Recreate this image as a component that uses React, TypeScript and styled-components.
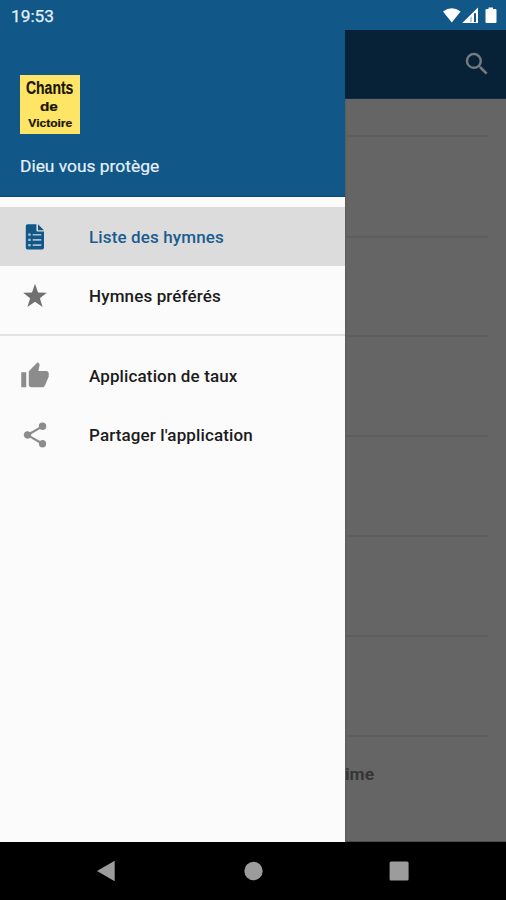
import React from "react";
import styled, { createGlobalStyle } from "styled-components";

const GlobalStyle = createGlobalStyle`
  *, *::before, *::after { box-sizing: border-box; }
  body { margin: 0; background: #000; font-family: Roboto, "Noto Sans", sans-serif; }
  svg { display: block; flex: none; }
`;

const Screen = styled.div`
  width: 506px;
  height: 900px;
  display: grid;
  grid-template-rows: 30px minmax(0, 1fr) 58px;
  overflow: hidden;
`;

const StatusBar = styled.header`
  display: flex;
  align-items: center;
  justify-content: space-between;
  padding: 2px 8px 0 11px;
  background: #115788;
  color: #e3eff9;
  font-size: 17.3px;
  line-height: 28px;
  -webkit-text-stroke: 0.25px currentColor;
`;

const Body = styled.div`
  display: grid;
  grid-template-columns: 345px 1fr;
  min-height: 0;
`;

const Drawer = styled.aside`
  background: #fbfbfb;
`;

const DrawerHeader = styled.div`
  height: 167px;
  padding: 45px 20px 0;
  background: #115788;
  border-bottom: 1px solid #0a4a7c;
`;

const Logo = styled.div`
  width: 60px;
  height: 59px;
  display: flex;
  flex-direction: column;
  align-items: center;
  padding-top: 3px;
  background: #fee566;
  color: #191505;
  font-family: "Liberation Sans", Arial, sans-serif;
  font-weight: 700;
`;

const LogoLine = styled.span<{ $size: number; $stretch: number; $height: number; $shift?: number }>`
  font-size: ${(p) => p.$size}px;
  line-height: ${(p) => p.$height}px;
  height: ${(p) => p.$height}px;
  margin-left: ${(p) => p.$shift ?? 0}px;
  transform: scaleX(${(p) => p.$stretch});
  -webkit-text-stroke: 0.2px #191505;
`;

const Greeting = styled.p`
  margin: 21px 0 0;
  color: #e6f1fa;
  font-size: 17.4px;
  line-height: 22px;
  -webkit-text-stroke: 0.2px currentColor;
`;

const Menu = styled.nav`
  padding-top: 10px;
`;

const MenuItem = styled.div<{ $active?: boolean }>`
  height: 59px;
  display: grid;
  grid-template-columns: 30px 1fr;
  column-gap: 39px;
  align-items: center;
  padding: 0 20px;
  background: ${(p) => (p.$active ? "#dcdcdc" : "transparent")};
  color: ${(p) => (p.$active ? "#1b5c90" : "#1c1c1c")};
  font-size: 17px;
  font-weight: 500;
  letter-spacing: 0.13px;
  white-space: nowrap;
`;

const IconSlot = styled.span<{ $color: string }>`
  display: flex;
  justify-content: center;
  color: ${(p) => p.$color};
`;

const Divider = styled.hr`
  height: 2px;
  margin: 9px 0 10px;
  border: 0;
  background: #e2e2e2;
`;

const Page = styled.main`
  display: flex;
  flex-direction: column;
  background: #656565;
  border-bottom: 1px solid #4c4c4c;
  border-left: 1px solid #5c5c5c;
  min-width: 0;
`;

const AppBar = styled.div`
  height: 69px;
  margin-left: -1px;
  display: flex;
  align-items: center;
  justify-content: flex-end;
  padding-right: 14px;
  background: #072237;
  border-bottom: 1px solid #152b3c;
  color: #747a7f;
`;

const HymnRow = styled.div<{ $height: number; $last?: boolean }>`
  height: ${(p) => p.$height}px;
  margin-left: -1px;
  margin-right: 18px;
  padding-top: 26px;
  border-bottom: ${(p) => (p.$last ? "0" : "2px solid #5e5e5e")};
  color: #363636;
  font-size: 17.4px;
  font-weight: 700;
  line-height: 22px;
`;

const NavBar = styled.footer`
  display: flex;
  align-items: center;
  justify-content: space-between;
  padding: 0 97px;
  background: #000;
  color: #9c9c9c;
`;

const StatusIcons = () => (
  <svg width="56" height="22" viewBox="0 0 56 22" fill="#fff">
    <path d="M1 6.4Q9.8.3 18.6 6.4L9.8 17.6Z" />
    <path d="M36 2.6V18H20.2Z" />
    <path d="M32 8.3h2V17h-2z" fill="#115788" />
    <path d="M30 11V17h-2v-4z" fill="#b5cbdc" />
    <path d="M46.500 2.500h4.500v1.600h2.500q1 0 1 1V17q0 1-1 1h-9q-1 0-1-1V5.100q0-1 1-1h2z" />
  </svg>
);

const SearchIcon = () => (
  <svg width="30" height="30" viewBox="0 0 24 24" fill="currentColor">
    <path d="M15.500 14h-.79l-.28-.27A6.471 6.471 0 0 0 16 9.500 6.500 6.500 0 1 0 9.500 16c1.610 0 3.090-.59 4.230-1.570l.27.28v.79l5 4.990L20.490 19l-4.990-5zm-6 0C7.010 14 5 11.990 5 9.500S7.010 5 9.500 5 14 7.010 14 9.500 11.990 14 9.500 14z" />
  </svg>
);

const ListIcon = () => (
  <svg width="20" height="26" viewBox="0 0 20 26">
    <path d="M2.500.3H11.400v6q0 1.300 1.300 1.300H19v16.200q0 1.700-1.700 1.700H2.500Q.8 25.500.8 23.800V2Q.8.3 2.500.3ZM13 .3 19 6.200H13Z" fill="currentColor" />
    <path d="M3.200 9.500h2.500v2.300H3.200zM3.200 14.800h2.500v2.300H3.200zM3.200 20h2.500v2.300H3.200zM7.700 9.900h8.600v1.600H7.700zM7.700 15.100h8.600v1.600H7.700zM7.700 20.300h8.600v1.600H7.700z" fill="#a9bfd0" />
  </svg>
);

const StarIcon = () => (
  <svg width="26" height="26" viewBox="0 0 26 26" fill="currentColor">
    <path d="M13 .8 16 9.600 24.800 9.700 17.900 15.200 20.600 24 13 18.800 5.400 24 8.100 15.200 1.200 9.700 10 9.600Z" />
  </svg>
);

const ThumbIcon = () => (
  <svg width="30" height="30" viewBox="0 0 24 24" fill="currentColor">
    <path d="M1 21h4V9H1v12zm22-11c0-1.100-.9-2-2-2h-6.310l.95-4.570.03-.32c0-.41-.17-.79-.44-1.060L14.170 1 7.590 7.590C7.220 7.950 7 8.450 7 9v10c0 1.100.9 2 2 2h9c.83 0 1.540-.5 1.840-1.220l3.020-7.050c.09-.23.14-.47.14-.73v-2z" />
  </svg>
);

const ShareIcon = () => (
  <svg width="30" height="30" viewBox="0 0 24 24" fill="currentColor">
    <path d="M18 16.080c-.76 0-1.440.3-1.960.77L8.910 12.700c.05-.23.09-.46.09-.7s-.04-.47-.09-.7l7.050-4.110c.54.5 1.250.81 2.040.81a3 3 0 1 0-3-3c0 .24.040.47.090.7L8.040 9.810A3 3 0 1 0 6 15c.79 0 1.500-.31 2.040-.81l7.120 4.160c-.05.21-.08.43-.08.65A2.920 2.920 0 1 0 18 16.080z" />
  </svg>
);

const BackIcon = () => (
  <svg width="18" height="22" viewBox="0 0 18 22" fill="currentColor">
    <path d="M0 11 17.700.7v20.600z" />
  </svg>
);

const HomeIcon = () => (
  <svg width="22" height="20" viewBox="0 0 22 20" fill="currentColor">
    <circle cx="12.500" cy="10" r="9.200" />
  </svg>
);

const RecentsIcon = () => (
  <svg width="20" height="20" viewBox="0 0 20 20" fill="currentColor">
    <rect x=".6" y=".4" width="19" height="19" rx="1.500" />
  </svg>
);

const hymns = [38, 101, 99, 100, 100, 100, 100];

export default function App() {
  return (
    <Screen>
      <GlobalStyle />
      <StatusBar>
        <span>19:53</span>
        <StatusIcons />
      </StatusBar>
      <Body>
        <Drawer>
          <DrawerHeader>
            <Logo>
              <LogoLine $size={17.5} $height={20} $stretch={0.8}>Chants</LogoLine>
              <LogoLine $size={13.5} $height={18} $stretch={1.14} $shift={-3}>de</LogoLine>
              <LogoLine $size={10} $height={16} $stretch={1.2}>Victoire</LogoLine>
            </Logo>
            <Greeting>Dieu vous protège</Greeting>
          </DrawerHeader>
          <Menu>
            <MenuItem $active>
              <IconSlot $color="#115788"><ListIcon /></IconSlot>
              Liste des hymnes
            </MenuItem>
            <MenuItem>
              <IconSlot $color="#707070"><StarIcon /></IconSlot>
              Hymnes préférés
            </MenuItem>
            <Divider />
            <MenuItem>
              <IconSlot $color="#8c8c8c"><ThumbIcon /></IconSlot>
              Application de taux
            </MenuItem>
            <MenuItem>
              <IconSlot $color="#8c8c8c"><ShareIcon /></IconSlot>
              Partager l'application
            </MenuItem>
          </Menu>
        </Drawer>
        <Page>
          <AppBar><SearchIcon /></AppBar>
          {hymns.map((height, index) => (
            <HymnRow key={index} $height={height} />
          ))}
          <HymnRow $height={80} $last>ime</HymnRow>
        </Page>
      </Body>
      <NavBar>
        <BackIcon />
        <HomeIcon />
        <RecentsIcon />
      </NavBar>
    </Screen>
  );
}
